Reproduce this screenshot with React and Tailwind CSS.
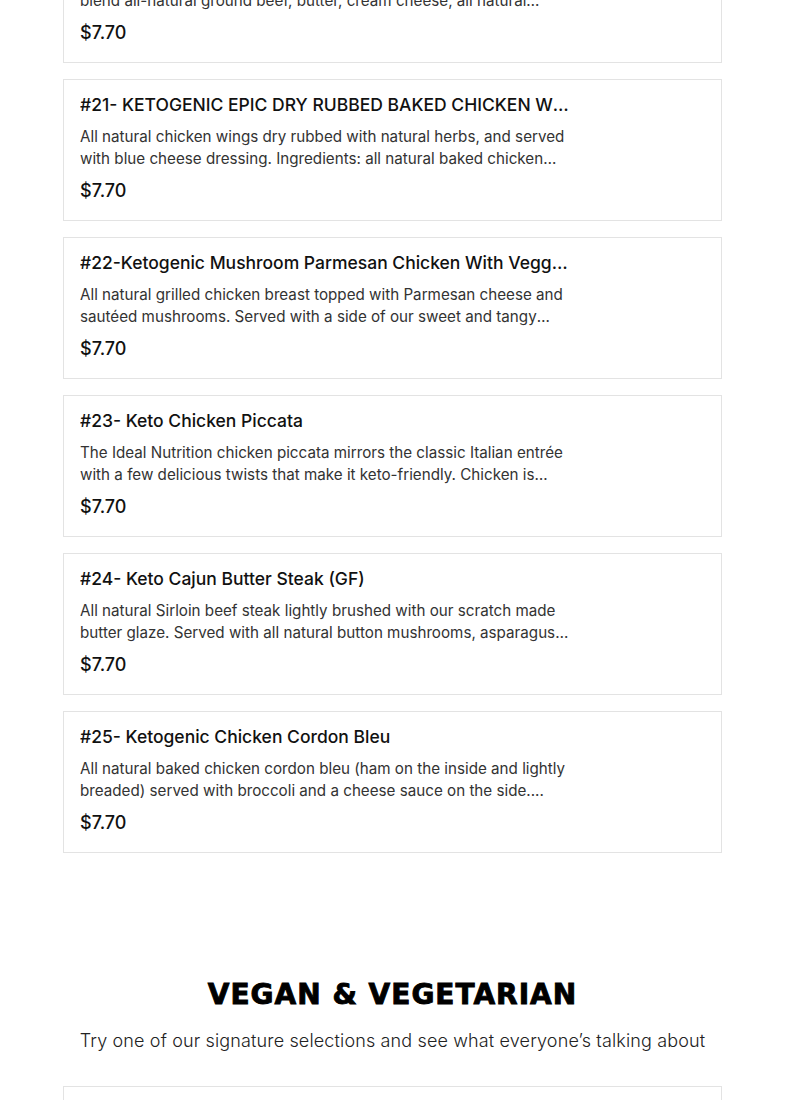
import React from "react";

const items = [
  {
    title: "#20- Keto Cheeseburger Casserole",
    desc: "Our signature keto cheeseburger casserole made with our special blend all-natural ground beef, butter, cream cheese, all natural cheddar cheese and spices.",
  },
  {
    title: "#21- KETOGENIC EPIC DRY RUBBED BAKED CHICKEN WINGS",
    desc: "All natural chicken wings dry rubbed with natural herbs, and served with blue cheese dressing. Ingredients: all natural baked chicken wings, herbs, spices, blue cheese dressing.",
  },
  {
    title: "#22-Ketogenic Mushroom Parmesan Chicken With Veggies",
    desc: "All natural grilled chicken breast topped with Parmesan cheese and sautéed mushrooms. Served with a side of our sweet and tangy vegetables.",
  },
  {
    title: "#23- Keto Chicken Piccata",
    desc: "The Ideal Nutrition chicken piccata mirrors the classic Italian entrée with a few delicious twists that make it keto-friendly. Chicken is lightly breaded.",
  },
  {
    title: "#24- Keto Cajun Butter Steak (GF)",
    desc: "All natural Sirloin beef steak lightly brushed with our scratch made butter glaze. Served with all natural button mushrooms, asparagus and more.",
  },
  {
    title: "#25- Ketogenic Chicken Cordon Bleu",
    desc: "All natural baked chicken cordon bleu (ham on the inside and lightly breaded) served with broccoli and a cheese sauce on the side....",
  },
];

function Card({ title, desc }) {
  return (
    <div className="border border-[#e3e3e3] bg-white h-[142px] pl-[16px] pr-4 pt-[13px]">
      <div className="w-[498px]">
        <div className="w-[490px] truncate text-[17.5px] leading-[24px] font-medium text-[#111]">{title}</div>
        <div className="mt-[9px] line-clamp-2 text-[15.2px] leading-[22px] text-[#333]">{desc}</div>
        <div className="mt-[9px] text-[18px] leading-[24px] font-medium text-[#111]">$7.70</div>
      </div>
    </div>
  );
}

export default function App() {
  return (
    <div className="bg-white w-[785px] h-[1100px] overflow-hidden" style={{ fontFamily: "Inter, 'Liberation Sans', sans-serif" }}>
      <div className="mx-[63px] -mt-[79px] flex flex-col gap-[16px]">
        {items.map((it, i) => (
          <Card key={i} {...it} />
        ))}
      </div>
      <div className="mt-[126px] flex flex-col items-center">
        <h2
          className="text-[28px] leading-[32px] font-black tracking-[1px] text-black [-webkit-text-stroke:0.9px_black]"
          style={{ fontFamily: "'DejaVu Sans', sans-serif" }}
        >
          VEGAN &amp; VEGETARIAN
        </h2>
        <p className="mt-[17px] text-[18px] leading-[26px] font-light tracking-[0.14px] text-[#222]">
          Try one of our signature selections and see what everyone’s talking about
        </p>
      </div>
      <div className="mx-[63px] mt-[32px] border border-[#e3e3e3] h-[142px]" />
    </div>
  );
}
